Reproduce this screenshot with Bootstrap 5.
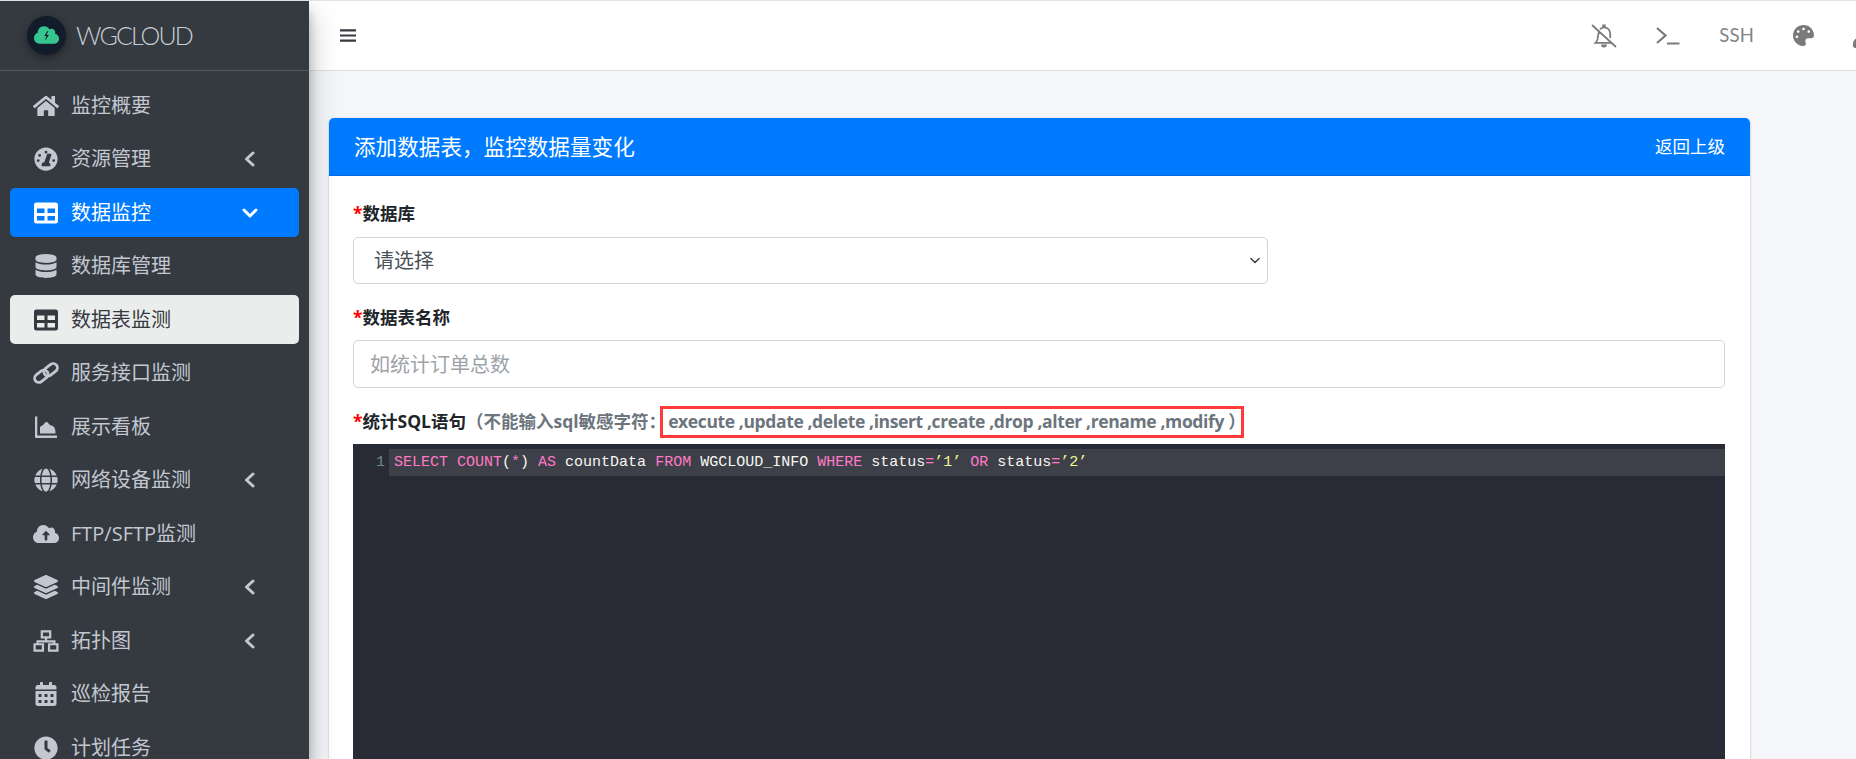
<!DOCTYPE html>
<html lang="zh-CN">
<head>
<meta charset="utf-8">
<title>WGCLOUD</title>
<link href="https://cdn.jsdelivr.net/npm/bootstrap@5.3.0/dist/css/bootstrap.min.css" rel="stylesheet">
<style>
html,body{height:100%;overflow:hidden}
body{background:#f4f6f9;font-family:"Open Sans","Noto Sans CJK SC",sans-serif;font-size:20px;border-top:1px solid #dfe2e6}
.shell{height:758px;overflow:hidden}
.side{width:309px;flex:0 0 309px;background:#343a40;color:#c2c7d0;box-shadow:0 14px 28px rgba(0,0,0,.25),0 10px 10px rgba(0,0,0,.22);z-index:2;overflow:hidden}
.brandrow{height:70px;flex:0 0 70px;border-bottom:1px solid #4f5962;padding-left:27px;gap:10px}
.logoball{width:39px;height:39px;border-radius:50%;background:#131c2b;box-shadow:0 3px 8px rgba(0,0,0,.4);flex:0 0 39px}
.brandname{font-family:"Lato","Noto Sans CJK SC",sans-serif;font-weight:300;font-size:25px;letter-spacing:-1.9px;color:#c8ccd3;line-height:1}
.sidenav{padding:10px 10px 0;flex:0 0 auto}
.sidelink{height:49px;flex:0 0 49px;margin-bottom:4.5px;border-radius:5px;padding:0 0 0 24px;color:#c2c7d0;gap:12px;line-height:1;font-size:20px}
.sidelink.lit{background:#007bff;color:#fff}
.sidelink.lit2{background:#ebecec;color:#343a40}
.sideico{width:26px;height:24px;flex:0 0 26px;fill:currentColor;margin-left:-1px}
.sidearrow{width:16px;height:16px;margin-left:auto;margin-right:41px;fill:none;stroke:currentColor;stroke-width:3;stroke-linecap:round;stroke-linejoin:round}
.mainpane{min-width:0}
.topbar{height:70px;background:#fff;border-bottom:1px solid #dee2e6;padding:0;overflow:hidden;flex:0 0 70px;flex-wrap:nowrap}
.burger{width:16px;height:15px;margin-left:31px;fill:#343a40}
.topicons{margin-left:auto;gap:39px;color:#7a7a7a;margin-right:-18px;font-size:17.5px}
.topico{fill:currentColor;display:block;flex:none}
.ssh{font-family:"Lato",sans-serif;font-size:18.5px;line-height:1;color:#808488;letter-spacing:.2px}
.panelwrap{padding:47px 106px 0 20px}
.sheet{border:0;border-radius:5px;box-shadow:0 0 1px rgba(0,0,0,.125),0 1px 3px rgba(0,0,0,.2)}
.sheethead{background:#007bff;color:#fff;height:58px;padding:0 25px;border-bottom:1px solid rgba(0,0,0,.125);border-radius:5px 5px 0 0!important}
.sheettitle{font-size:21.6px;line-height:1}
.sheetback{font-size:17.5px;line-height:1;color:#fff;text-decoration:none}
.sheetbody{padding:25px 25px 0 24px}
.fieldlabel{font-weight:700;font-size:17.5px;line-height:24px;color:#212529;margin:0 0 12px}
.fieldlabel.tight{margin-bottom:11px}
.star{color:#f00}
.greyed{color:#6c757d}
.redbox{display:inline-block;width:584px;white-space:nowrap;border:3px solid #ff3a3a;padding:0 0 1px 5px;line-height:25px;margin-left:-6px;letter-spacing:-.38px}
.pick{width:915px;height:47px;font-size:20px;color:#495057;padding:1px 20px 0;border-color:#ced4da;border-radius:5px;margin-bottom:21px;background-position:right 5px center;background-size:14px 11px}
.entry{height:48px;font-size:20px;padding:0 16px;border-color:#ced4da;border-radius:5px;margin-bottom:18px}
.entry::placeholder{color:#9da3a8}
.codebox{background:#282a36;height:400px;margin-top:-6px;padding-top:5px;font-family:"Liberation Mono",monospace;font-size:15px}
.codegutter{width:36px;text-align:right;padding-right:4px;color:#6d8a88;line-height:27px}
.codeline{background:#3e4049;height:27px;line-height:27px;padding-left:5px;color:#f8f8f2;white-space:pre}
.kw{color:#ff79c6}
.str{color:#f1fa8c}
</style>
</head>
<body>
<div class="shell d-flex">
<aside class="side d-flex flex-column">
  <div class="brandrow d-flex align-items-center">
    <div class="logoball d-flex align-items-center justify-content-center">
      <svg width="25" height="19" viewBox="0 0 640 480"><path fill="#35c690" d="M537.6 194.6c4.1-10.7 6.4-22.4 6.4-34.6 0-53-43-96-96-96-19.7 0-38.1 6-53.3 16.2C367 32.2 315.3 0 256 0 167.600 0 96 71.600 96 160c0 2.700.1 5.400.2 8.100C40.200 187.800 0 241.200 0 304c0 79.500 64.500 144 144 144h368c70.700 0 128-57.300 128-128 0-61.900-44-113.600-102.400-125.400z"/><path fill="#131c2b" d="M345 125l-80 130h50l-35 120 100-150h-55l40-100z"/></svg>
    </div>
    <span class="brandname">WGCLOUD</span>
  </div>
  <nav class="sidenav nav flex-column flex-nowrap">
    <a class="sidelink nav-link d-flex align-items-center" href="#"><svg class="sideico" viewBox="0 0 576 512"><path d="M280.37 148.26L96 300.11V464a16 16 0 0 0 16 16l112.06-.29a16 16 0 0 0 15.92-16V368a16 16 0 0 1 16-16h64a16 16 0 0 1 16 16v95.64a16 16 0 0 0 16 16.05L464 480a16 16 0 0 0 16-16V300L295.67 148.26a12.19 12.19 0 0 0-15.3 0zM571.6 251.47L488 182.56V44.05a12 12 0 0 0-12-12h-56a12 12 0 0 0-12 12v72.61L318.47 43a48 48 0 0 0-61 0L4.34 251.47a12 12 0 0 0-1.6 16.9l25.5 31A12 12 0 0 0 45.15 301l235.22-193.74a12.19 12.19 0 0 1 15.3 0L530.9 301a12 12 0 0 0 16.9-1.6l25.5-31a12 12 0 0 0-1.7-16.93z"/></svg>监控概要</a>
    <a class="sidelink nav-link d-flex align-items-center" href="#"><svg class="sideico" viewBox="0 0 512 512"><path fill-rule="evenodd" d="M256 8C119 8 8 119 8 256s111 248 248 248 248-111 248-248S393 8 256 8zm0 72a30 30 0 1 1 0 60 30 30 0 0 1 0-60zM120 150a30 30 0 1 1 0 60 30 30 0 0 1 0-60zm-30 110a30 30 0 1 1 0 60 30 30 0 0 1 0-60zm330 0a30 30 0 1 1 0 60 30 30 0 0 1 0-60zm-66-118c14 5 20 18 16 30l-52 156c19 11 32 31 32 54 0 9-2 18-6 26H168c-4-8-6-17-6-26 0-32 26-59 60-61l60-176c4-2 0-3 12-3z"/></svg>资源管理<svg class="sidearrow" viewBox="0 0 16 16"><path d="M11 2L4.500 8l6.500 6"/></svg></a>
    <a class="sidelink lit nav-link d-flex align-items-center" href="#"><svg class="sideico" viewBox="0 0 512 512"><path d="M464 32H48C21.490 32 0 53.490 0 80v352c0 26.510 21.490 48 48 48h416c26.510 0 48-21.490 48-48V80c0-26.510-21.490-48-48-48zM224 416H64v-96h160v96zm0-160H64v-96h160v96zm224 160H288v-96h160v96zm0-160H288v-96h160v96z"/></svg>数据监控<svg class="sidearrow" viewBox="0 0 16 16"><path d="M2 5l6 6 6-6"/></svg></a>
    <a class="sidelink nav-link d-flex align-items-center" href="#"><svg class="sideico" viewBox="0 0 448 512"><path d="M448 73.143v45.714C448 159.143 347.667 192 224 192S0 159.143 0 118.857V73.143C0 32.857 100.333 0 224 0s224 32.857 224 73.143zM448 176v102.857C448 319.143 347.667 352 224 352S0 319.143 0 278.857V176c48.125 33.143 136.208 48.572 224 48.572S399.874 209.143 448 176zm0 160v102.857C448 479.143 347.667 512 224 512S0 479.143 0 438.857V336c48.125 33.143 136.208 48.572 224 48.572S399.874 369.143 448 336z"/></svg>数据库管理</a>
    <a class="sidelink lit2 nav-link d-flex align-items-center" href="#"><svg class="sideico" viewBox="0 0 512 512"><path d="M464 32H48C21.490 32 0 53.490 0 80v352c0 26.510 21.490 48 48 48h416c26.510 0 48-21.490 48-48V80c0-26.510-21.490-48-48-48zM224 416H64v-96h160v96zm0-160H64v-96h160v96zm224 160H288v-96h160v96zm0-160H288v-96h160v96z"/></svg>数据表监测</a>
    <a class="sidelink nav-link d-flex align-items-center" href="#"><svg class="sideico" viewBox="0 0 28 24"><g fill="none" stroke="currentColor" stroke-width="3"><rect x="1" y="11" width="16" height="9" rx="4.500" transform="rotate(-38 9 15.500)"/><rect x="11" y="4" width="16" height="9" rx="4.500" transform="rotate(-38 19 8.500)"/></g></svg>服务接口监测</a>
    <a class="sidelink nav-link d-flex align-items-center" href="#"><svg class="sideico" viewBox="0 0 24 24"><path d="M1 1.500h2.300v19H23V23H2a1 1 0 0 1-1-1z"/><path d="M6 18.500v-6c0-1.500 1.500-1 3-2.500 1.500-1.500 2-3 3.500-3s2 2 3.500 3 3 .5 4 2 1.500 3 1.500 6.500z"/></svg>展示看板</a>
    <a class="sidelink nav-link d-flex align-items-center" href="#"><svg class="sideico" viewBox="0 0 496 512"><path d="M336.500 160C322 70.700 287.800 8 248 8s-74 62.700-88.500 152h177zM152 256c0 22.200 1.200 43.500 3.300 64h185.300c2.100-20.500 3.300-41.800 3.300-64s-1.200-43.500-3.300-64H155.300c-2.100 20.500-3.300 41.800-3.300 64zm324.700-96c-28.600-67.900-86.500-120.400-158-141.600 24.400 33.800 41.200 84.700 50 141.600h108zM177.200 18.400C105.800 39.600 47.800 92.100 19.300 160h108c8.700-56.900 25.500-107.800 49.900-141.600zM487.400 192H372.700c2.100 21 3.300 42.500 3.300 64s-1.200 43-3.300 64h114.600c5.500-20.500 8.600-41.800 8.600-64s-3.100-43.500-8.500-64zM120 256c0-21.500 1.200-43 3.300-64H8.600C3.200 212.500 0 233.800 0 256s3.200 43.500 8.600 64h114.600c-2-21-3.200-42.500-3.200-64zm39.500 96c14.500 89.300 48.700 152 88.500 152s74-62.700 88.500-152h-177zm159.300 141.600c71.400-21.200 129.400-73.700 158-141.600h-108c-8.800 56.900-25.600 107.800-50 141.600zM19.300 352c28.600 67.900 86.500 120.400 158 141.600-24.400-33.800-41.200-84.700-50-141.600h-108z"/></svg>网络设备监测<svg class="sidearrow" viewBox="0 0 16 16"><path d="M11 2L4.500 8l6.500 6"/></svg></a>
    <a class="sidelink nav-link d-flex align-items-center" href="#"><svg class="sideico" viewBox="0 0 640 512"><path d="M537.600 226.600c4.100-10.700 6.400-22.400 6.400-34.600 0-53-43-96-96-96-19.700 0-38.100 6-53.300 16.200C367 64.200 315.300 32 256 32c-88.400 0-160 71.600-160 160 0 2.700.1 5.400.2 8.100C40.200 219.800 0 273.200 0 336c0 79.500 64.500 144 144 144h368c70.700 0 128-57.300 128-128 0-61.900-44-113.600-102.400-125.400zM393.400 288H352v112c0 8.800-7.200 16-16 16h-32c-8.800 0-16-7.200-16-16V288h-41.400c-14.300 0-21.400-17.200-11.300-27.300l73.400-73.400c6.200-6.200 16.400-6.200 22.600 0l73.400 73.400c10.100 10.100 2.900 27.300-11.300 27.300z"/></svg>FTP/SFTP监测</a>
    <a class="sidelink nav-link d-flex align-items-center" href="#"><svg class="sideico" viewBox="0 0 512 512"><path d="M12.410 148.020l232.940 105.670c6.800 3.090 14.490 3.090 21.290 0l232.940-105.670c16.550-7.510 16.550-32.520 0-40.030L266.650 2.310a25.607 25.607 0 0 0-21.290 0L12.410 107.980c-16.550 7.510-16.550 32.530 0 40.040zm487.180 88.280l-58.090-26.330-161.640 73.270c-7.560 3.430-15.590 5.170-23.860 5.170s-16.290-1.740-23.860-5.170L70.510 209.970l-58.100 26.330c-16.550 7.500-16.550 32.500 0 40l232.940 105.590c6.800 3.080 14.490 3.080 21.290 0L499.590 276.300c16.550-7.500 16.550-32.500 0-40zm0 127.800l-57.870-26.230-161.860 73.370c-7.560 3.430-15.590 5.170-23.860 5.170s-16.290-1.740-23.860-5.170L70.290 337.870 12.410 364.100c-16.550 7.500-16.550 32.500 0 40l232.940 105.590c6.800 3.080 14.490 3.080 21.290 0L499.590 404.100c16.550-7.500 16.550-32.500 0-40z"/></svg>中间件监测<svg class="sidearrow" viewBox="0 0 16 16"><path d="M11 2L4.500 8l6.500 6"/></svg></a>
    <a class="sidelink nav-link d-flex align-items-center" href="#"><svg class="sideico" viewBox="0 0 28 24"><path fill="none" stroke="currentColor" stroke-width="2.400" d="M9.500 1.700h9v6.500h-9zM14 8.500v4M5 14.500v-2.200h18v2.200M1.700 15.500h9v6.800h-9zM17.300 15.500h9v6.800h-9z"/></svg>拓扑图<svg class="sidearrow" viewBox="0 0 16 16"><path d="M11 2L4.500 8l6.500 6"/></svg></a>
    <a class="sidelink nav-link d-flex align-items-center" href="#"><svg class="sideico" viewBox="0 0 448 512"><path d="M0 464c0 26.500 21.500 48 48 48h352c26.500 0 48-21.500 48-48V192H0v272zm320-196c0-6.600 5.400-12 12-12h40c6.600 0 12 5.400 12 12v40c0 6.600-5.400 12-12 12h-40c-6.600 0-12-5.400-12-12v-40zm0 128c0-6.600 5.400-12 12-12h40c6.600 0 12 5.400 12 12v40c0 6.600-5.400 12-12 12h-40c-6.600 0-12-5.400-12-12v-40zM192 268c0-6.600 5.400-12 12-12h40c6.600 0 12 5.400 12 12v40c0 6.600-5.400 12-12 12h-40c-6.600 0-12-5.400-12-12v-40zm0 128c0-6.600 5.400-12 12-12h40c6.600 0 12 5.400 12 12v40c0 6.600-5.400 12-12 12h-40c-6.600 0-12-5.400-12-12v-40zM64 268c0-6.600 5.400-12 12-12h40c6.600 0 12 5.400 12 12v40c0 6.600-5.400 12-12 12H76c-6.600 0-12-5.400-12-12v-40zm0 128c0-6.600 5.400-12 12-12h40c6.600 0 12 5.400 12 12v40c0 6.600-5.400 12-12 12H76c-6.600 0-12-5.400-12-12v-40zM400 64h-48V16c0-8.800-7.200-16-16-16h-32c-8.800 0-16 7.200-16 16v48H160V16c0-8.800-7.200-16-16-16h-32c-8.800 0-16 7.200-16 16v48H48C21.500 64 0 85.500 0 112v48h448v-48c0-26.500-21.500-48-48-48z"/></svg>巡检报告</a>
    <a class="sidelink nav-link d-flex align-items-center" href="#"><svg class="sideico" viewBox="0 0 512 512"><path d="M256 8C119 8 8 119 8 256s111 248 248 248 248-111 248-248S393 8 256 8zm92.490 313l-20 25a16 16 0 0 1-22.490 2.500l-67-49.720a40 40 0 0 1-15-31.230V112a16 16 0 0 1 16-16h32a16 16 0 0 1 16 16v144l58 42.500a16 16 0 0 1 2.490 22.500z"/></svg>计划任务</a>
  </nav>
</aside>
<div class="mainpane flex-grow-1 d-flex flex-column">
  <header class="topbar navbar d-flex align-items-center">
    <svg class="burger" viewBox="0 0 18 16"><path d="M0 1h18v2.400H0zM0 6.800h18v2.400H0zM0 12.600h18V15H0z"/></svg>
    <div class="topicons d-flex align-items-center">
      <svg class="topico" width="26" height="24" viewBox="0 0 26 24"><path fill="none" stroke="currentColor" stroke-width="1.800" stroke-linecap="round" d="M1.500 1.500l23 21M8.300 7.500c-1 1.500-1.300 3-1.300 5 0 3.500-1 4.800-2.500 6.300h15M9.500 4.800c1.200-1.100 2.300-1.500 3.500-1.500 3.800 0 6.200 3 6.200 7v3"/><path fill="currentColor" d="M11.300.5h3.400v3h-3.400zM10 20.500h6a3 3 0 0 1-6 0z"/></svg>
      <svg class="topico" width="24" height="18" viewBox="0 0 24 18"><path fill="none" stroke="currentColor" stroke-width="2.200" d="M1 1l8.500 7.500L1 16M11 16.500h12.500"/></svg>
      <span class="ssh">SSH</span>
      <svg class="topico" width="21" height="21" viewBox="0 0 512 512"><path d="M204.300 5C104.900 24.400 24.800 104.300 5.200 203.400c-37 187 131.700 326.400 258.800 306.700 41.200-6.400 61.400-54.600 42.500-91.700-23.100-45.400 9.900-98.400 60.900-98.400h79.700c35.800 0 64.800-29.600 64.900-65.300C511.500 97.100 368.100-26.900 204.300 5zM96 320c-17.700 0-32-14.300-32-32s14.300-32 32-32 32 14.300 32 32-14.300 32-32 32zm32-128c-17.700 0-32-14.300-32-32s14.300-32 32-32 32 14.300 32 32-14.300 32-32 32zm128-64c-17.700 0-32-14.300-32-32s14.300-32 32-32 32 14.300 32 32-14.300 32-32 32zm128 64c-17.700 0-32-14.300-32-32s14.300-32 32-32 32 14.300 32 32-14.300 32-32 32z"/></svg>
      <svg class="topico" width="21" height="24" viewBox="0 0 448 512"><path d="M224 256c70.700 0 128-57.300 128-128S294.700 0 224 0 96 57.300 96 128s57.300 128 128 128zm89.600 32h-16.700c-22.200 10.200-46.900 16-72.900 16s-50.600-5.800-72.900-16h-16.700C60.200 288 0 348.200 0 422.400V464c0 26.500 21.500 48 48 48h352c26.500 0 48-21.500 48-48v-41.600c0-74.200-60.200-134.400-134.400-134.400z"/></svg>
    </div>
  </header>
  <main class="panelwrap">
    <section class="sheet card">
      <div class="sheethead card-header d-flex align-items-center justify-content-between">
        <span class="sheettitle">添加数据表，监控数据量变化</span>
        <a class="sheetback" href="#">返回上级</a>
      </div>
      <div class="sheetbody card-body">
        <label class="fieldlabel form-label d-block"><span class="star">*</span>数据库</label>
        <select class="pick form-select"><option>请选择</option></select>
        <label class="fieldlabel tight form-label d-block"><span class="star">*</span>数据表名称</label>
        <input class="entry form-control" type="text" placeholder="如统计订单总数">
        <label class="fieldlabel form-label d-block"><span class="star">*</span>统计SQL语句<span class="greyed">（不能输入sql敏感字符：<span class="redbox">execute ,update ,delete ,insert ,create ,drop ,alter ,rename ,modify ）</span></span></label>
        <div class="codebox d-flex">
          <div class="codegutter">1</div>
          <div class="codeline flex-grow-1"><span class="kw">SELECT</span> <span class="kw">COUNT</span>(<span class="kw">*</span>) <span class="kw">AS</span> countData <span class="kw">FROM</span> WGCLOUD_INFO <span class="kw">WHERE</span> status<span class="kw">=</span><span class="str">’1’</span> <span class="kw">OR</span> status<span class="kw">=</span><span class="str">’2’</span></div>
        </div>
      </div>
    </section>
  </main>
</div>
</div>
<script src="https://cdn.jsdelivr.net/npm/bootstrap@5.3.0/dist/js/bootstrap.bundle.min.js"></script>
</body>
</html>
